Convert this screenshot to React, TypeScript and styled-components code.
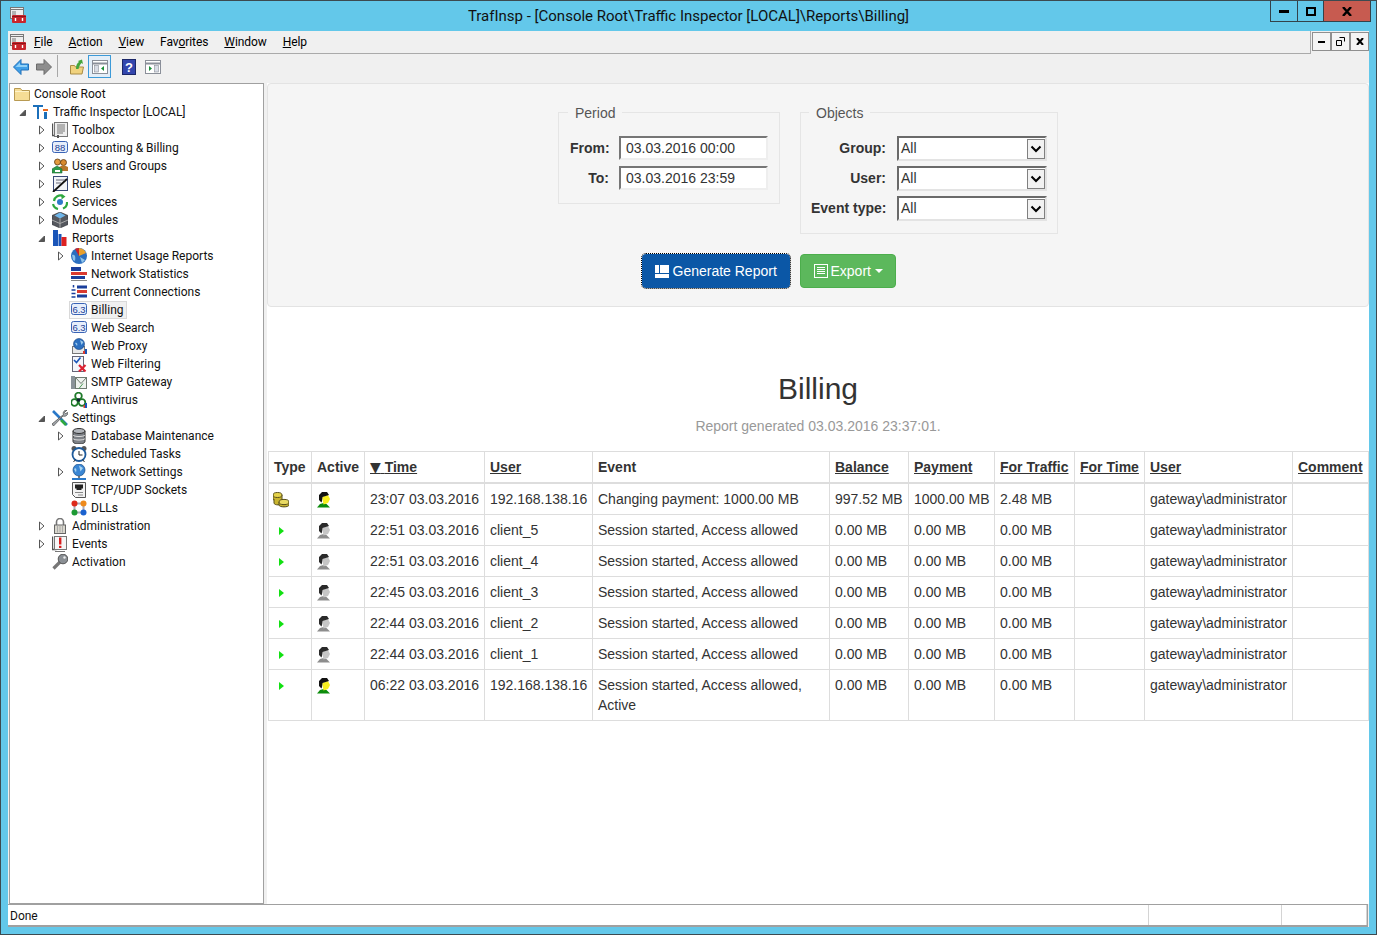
import {FC, ReactNode} from "react";
import styled, {createGlobalStyle} from "styled-components";

const uiFont = `Roboto, "Noto Sans", sans-serif`;
const pageFont = `"Liberation Sans", Arial, sans-serif`;

const icons: Record<string, ReactNode> = {
  app: <>
    <rect x=".5" y=".5" width="13" height="11" fill="#eee" stroke="#777"/>
    <path d="M1 2.500h12M2 5h4M2 7h4" stroke="#777"/>
    <rect x="2" y="8" width="14" height="8" rx="1" fill="#c8252c"/>
    <path d="M2 9.500h14" stroke="#8e1419"/>
    <path d="M5.500 11v3M12.500 11v3" stroke="#fff" strokeWidth="1.400"/>
  </>,
  folder: <>
    <path d="M.5 2.500h6l1.500 2h7.500v10h-15z" fill="#f6dd96" stroke="#b89a52"/>
    <path d="M1 5.500h14" stroke="#fff3c9"/>
  </>,
  logo: <>
    <path d="M0 1h10v2H6v12H4V3H0z" fill="#1b6fba"/>
    <rect x="10" y="5" width="5" height="2" fill="#ec6a1e"/>
    <rect x="11" y="8" width="3" height="7" fill="#1b6fba"/>
  </>,
  toolbox: <>
    <path d="M.5 1.500v12h4" fill="none" stroke="#555" strokeWidth="1.400"/>
    <rect x="2.500" y=".5" width="13" height="14" fill="#eee" stroke="#777"/>
    <path d="M5 3h8M5 5h8M5 7h8M5 9h8M5 11h6" stroke="#777"/>
    <rect x="5" y="13" width="2" height="3" fill="#555"/>
  </>,
  digits88: <>
    <rect x=".5" y="1.500" width="15" height="11" rx="2" fill="#e6eefb" stroke="#3a63b5"/>
    <text x="8" y="10.500" fontSize="9.500" textAnchor="middle" fontFamily={pageFont} fill="#1d3f95">88</text>
  </>,
  digits63: <>
    <rect x=".5" y="1.500" width="15" height="11" rx="2" fill="#e6eefb" stroke="#3a63b5"/>
    <text x="8" y="10.500" fontSize="9.500" textAnchor="middle" fontFamily={pageFont} fill="#1d3f95">6.3</text>
  </>,
  users: <>
    <circle cx="5.500" cy="4" r="3" fill="#e59b3d" stroke="#5b3a12" strokeWidth=".8"/>
    <circle cx="11.500" cy="4.500" r="3" fill="#d98a2e" stroke="#5b3a12" strokeWidth=".8"/>
    <path d="M7 13V9l4.500-2 4.500 2v4z" fill="#b8772b"/>
    <path d="M0 15v-4l5-3 5 3v4z" fill="#2f9a4b" stroke="#1f6a32" strokeWidth=".6"/>
    <rect x="3" y="12" width="5" height="2" fill="#fff"/>
  </>,
  rules: <>
    <rect x="1.500" y=".5" width="14" height="14" fill="#f2f4f8" stroke="#3a4a78"/>
    <path d="M1 16L15 3" stroke="#111" strokeWidth="1.800"/>
    <path d="M4 4h9M4 7h5" stroke="#667"/>
  </>,
  services: <>
    <path d="M2 7a6.500 6.500 0 0 1 9-5" fill="none" stroke="#2ea83f" strokeWidth="2.200"/>
    <path d="M9.500 0l4 2.500-4 3z" fill="#2ea83f"/>
    <path d="M15 8a6.500 6.500 0 0 1-4 6.500" fill="none" stroke="#2ea83f" strokeWidth="2.200"/>
    <path d="M6 15a6.500 6.500 0 0 1-5-5" fill="none" stroke="#2ea83f" strokeWidth="2.200"/>
    <circle cx="8" cy="8" r="3" fill="#2e79c9"/>
  </>,
  modules: <>
    <path d="M8 0l8 3.500v9L8 16l-8-3.500v-9z" fill="#55585e" stroke="#2c2e33" strokeWidth=".6"/>
    <path d="M8 .5l5.500 3L8 6.500l-5.500-3z" fill="#6fb6ea"/>
    <path d="M0 8l8 3.500L16 8M8 6.500V16" fill="none" stroke="#aaa"/>
  </>,
  reports: <>
    <rect x="1" y="0" width="5" height="16" fill="#1a55b8"/>
    <rect x="6.500" y="4" width="3" height="12" fill="#1a55b8"/>
    <rect x="9.500" y="7" width="5" height="9" fill="#dd2222"/>
  </>,
  internet: <>
    <circle cx="8" cy="8" r="8" fill="#2b6fc0"/>
    <path d="M1 7c3-1 4 2 3 6l-2-1zM9 9l5 3-3 3z" fill="#8fc3ea"/>
    <path d="M8 8V0a8 8 0 0 1 7 5z" fill="#e8a02e"/>
    <path d="M8 8L4 1a8 8 0 0 1 4-1z" fill="#c9252b"/>
  </>,
  netstat: <>
    <rect x="0" y="1" width="10" height="4" fill="#1a3f9c"/>
    <rect x="0" y="6" width="16" height="3" fill="#d93a30"/>
    <rect x="0" y="10" width="14" height="3" fill="#1a3f9c"/>
    <path d="M0 14.500h16" stroke="#888"/>
  </>,
  current: <>
    <path d="M2.500 1v2.500M.5 6h4M.5 9.500h4M.5 13h4" stroke="#1a3f9c" strokeWidth="1.500"/>
    <rect x="6" y="1.500" width="10" height="3" fill="#1a3f9c"/>
    <rect x="6" y="6" width="10" height="3" fill="#d93a30"/>
    <rect x="6" y="10.500" width="10" height="3" fill="#1a3f9c"/>
  </>,
  proxy: <>
    <rect x="1.500" y="8.500" width="12" height="7" fill="#e8e8e8" stroke="#777"/>
    <circle cx="8" cy="6" r="5.500" fill="#2b6fc0" stroke="#16407c" strokeWidth=".6"/>
    <path d="M4 5c2-1 3 1 2 3zM9 2l3.500 2-2 3z" fill="#9cc9ea"/>
    <rect x="14" y="11" width="2" height="5" fill="#1a55b8"/>
    <rect x="12" y="13" width="2" height="3" fill="#d93a30"/>
  </>,
  filter: <>
    <rect x="1.500" y=".5" width="11" height="15" fill="#f4f6fb" stroke="#667"/>
    <path d="M3 4l2.500 2.500 4-5" fill="none" stroke="#1a55b8" strokeWidth="1.600"/>
    <path d="M8 9l6.500 6.500M14.500 9L8 15.500" stroke="#dd2233" strokeWidth="2.200"/>
  </>,
  smtp: <>
    <rect x="0" y="2" width="4" height="13" fill="#8a9298"/>
    <rect x="4.500" y="3.500" width="11" height="11" fill="#eef2ee" stroke="#6e7a70"/>
    <path d="M4.500 3.500l5.500 6 5.500-6" fill="none" stroke="#6e7a70"/>
    <path d="M8 14.500l4-5" stroke="#4b9a55"/>
  </>,
  antivirus: <>
    <circle cx="7.500" cy="4" r="3.300" fill="none" stroke="#1f7a2a" strokeWidth="1.800"/>
    <circle cx="3.500" cy="10.500" r="3.300" fill="none" stroke="#1f7a2a" strokeWidth="1.800"/>
    <circle cx="11" cy="10.500" r="3.300" fill="none" stroke="#1f7a2a" strokeWidth="1.800"/>
    <circle cx="7.500" cy="8" r="1.800" fill="#123"/>
    <rect x="14" y="11" width="2" height="5" fill="#1a55b8"/>
    <rect x="12.500" y="13" width="1.500" height="3" fill="#d93a30"/>
  </>,
  settings: <>
    <path d="M1 1l14 14" stroke="#2a78c8" strokeWidth="2.600"/>
    <path d="M15 0c-2.500 0-4.500 2-3.500 4.500L0 14l1.500 2L11 6c2.500 1 5-1 5-3.500l-2.500 1-1-1z" fill="#a4a9ae" stroke="#444" strokeWidth=".7"/>
    <path d="M9 10l5 5" stroke="#2ea83f" strokeWidth="2.600"/>
  </>,
  db: <>
    <path d="M2 3v10.500c0 1.500 2.500 2.500 6 2.500s6-1 6-2.500V3" fill="#7d8187" stroke="#333"/>
    <ellipse cx="8" cy="3" rx="6" ry="2.500" fill="#b0b4ba" stroke="#333"/>
    <path d="M2 7c1 2 11 2 12 0M2 10.500c1 2 11 2 12 0" fill="none" stroke="#ddd"/>
  </>,
  tasks: <>
    <circle cx="3" cy="2.500" r="2.500" fill="#555"/>
    <circle cx="13" cy="2.500" r="2.500" fill="#555"/>
    <circle cx="8" cy="8.500" r="6.500" fill="#fff" stroke="#1d5a9c" strokeWidth="1.800"/>
    <path d="M8 5v4h3.500" fill="none" stroke="#222"/>
    <path d="M2.500 16l2-2.500M13.500 16l-2-2.500" stroke="#333"/>
  </>,
  netset: <>
    <circle cx="8" cy="6" r="6" fill="#3a86d4" stroke="#17497f" strokeWidth=".7"/>
    <path d="M3 5c2-2 3 0 2 3.500zM8 1.500L12 4 9.500 7.500z" fill="#a9d4f0"/>
    <path d="M8 12v2" stroke="#555" strokeWidth="1.500"/>
    <path d="M1 15h14" stroke="#2a78c8" strokeWidth="2"/>
  </>,
  tcp: <>
    <path d="M1.500.5h13v15h-10l-3-3z" fill="#f2f2f2" stroke="#555"/>
    <path d="M4 2.500h8v4h-1.500V8h-5V6.500H4z" fill="#222"/>
    <path d="M4 10.500h8M7 13h5" stroke="#888"/>
  </>,
  dlls: <>
    <path d="M3.500 3.500h9v9h-9z" fill="none" stroke="#aab" strokeWidth="2"/>
    <circle cx="3.500" cy="3.500" r="3" fill="#dd2a1c"/>
    <circle cx="12.500" cy="3.500" r="3" fill="#ee8a1c"/>
    <circle cx="3.500" cy="12.500" r="3" fill="#1d9a34"/>
    <circle cx="12.500" cy="12.500" r="3" fill="#1b62cf"/>
  </>,
  admin: <>
    <path d="M4.500 7V4a3.500 3.500 0 0 1 7 0v3" fill="none" stroke="#777" strokeWidth="1.600"/>
    <rect x="2.500" y="7" width="11" height="8.500" fill="#d8d6cc" stroke="#666"/>
    <path d="M5.500 7.500v7M8 7.500v7M10.500 7.500v7" stroke="#aaa"/>
  </>,
  events: <>
    <path d="M.5 .5v13h4" fill="none" stroke="#555" strokeWidth="1.400"/>
    <rect x="2.500" y=".5" width="12" height="13" fill="#f6f6f6" stroke="#777"/>
    <rect x="7" y="1.500" width="2.400" height="7" fill="#d81e1e"/>
    <rect x="7" y="9.800" width="2.400" height="2.200" fill="#d81e1e"/>
    <path d="M3 15.500h10" stroke="#777"/>
  </>,
  key: <>
    <path d="M9 7L1.500 14.500" stroke="#777" strokeWidth="3.200"/>
    <circle cx="11" cy="5" r="4.800" fill="#8a8f94" stroke="#555"/>
    <circle cx="12.500" cy="3.500" r="1.200" fill="#eee"/>
  </>,
  back: <>
    <path d="M8 .5L.5 8 8 15.500V11h7.500V5H8z" fill="#3f9fe8" stroke="#1f6fb8"/>
    <path d="M7 3.500L2.500 8H14V6H7z" fill="#8fd0f7"/>
  </>,
  forward: <>
    <path d="M8 .5L15.500 8 8 15.500V11H.5V5H8z" fill="#8d8d8d" stroke="#6b6b6b"/>
  </>,
  folderUp: <>
    <path d="M1.500 6.500h4l1 1.500h8l-1.500 7H1.500z" fill="#f0d27e" stroke="#a98c45"/>
    <path d="M7 10c0-4 1-6 3-7L9 2l4-1.500L14 5l-1.500-1C11 5.500 10 7.500 9.500 10z" fill="#43a63c"/>
  </>,
  panelLeft: <>
    <rect x=".5" y="1.500" width="15" height="13" fill="#fff" stroke="#8a8f99"/>
    <path d="M.5 4.500h15" stroke="#8a8f99" strokeWidth="2"/>
    <rect x="2.500" y="6.500" width="4" height="6.500" fill="#d9dde6" stroke="#8a8f99" strokeWidth=".6"/>
    <path d="M12 7l-3 2.500 3 2.500z" fill="#1b8f3a"/>
  </>,
  panelRight: <>
    <rect x=".5" y="1.500" width="15" height="13" fill="#fff" stroke="#8a8f99"/>
    <path d="M.5 4.500h15" stroke="#8a8f99" strokeWidth="2"/>
    <rect x="9.500" y="6.500" width="4" height="6.500" fill="#d9dde6" stroke="#8a8f99" strokeWidth=".6"/>
    <path d="M4 7l3 2.500L4 12z" fill="#1b8f3a"/>
  </>,
  help: <>
    <rect x="1.500" y=".5" width="13" height="15" fill="#3346ad" stroke="#1b2768"/>
    <text x="8" y="12.500" fontSize="13" fontWeight="700" textAnchor="middle" fontFamily={pageFont} fill="#fff">?</text>
  </>,
  coins: <>
    <path d="M0 3v4c0 2.500 9 2.500 9 0V3" fill="#c9b52f" stroke="#59501a"/>
    <ellipse cx="4.500" cy="3" rx="4.500" ry="2.500" fill="#e4d24a" stroke="#59501a"/>
    <path d="M1 7v4c0 2.500 8 2.500 8 0V7" fill="#c9b52f" stroke="#59501a"/>
    <path d="M6 10v3c0 2.500 10 2.500 10 0v-3" fill="#c9b52f" stroke="#59501a"/>
    <ellipse cx="11" cy="10" rx="5" ry="2.600" fill="#e9da63" stroke="#59501a"/>
  </>,
  personOn: <>
    <path d="M1 15.500l3-3.500 3.500-1 3 1 3.500 3.500z" fill="#0c8c0c"/>
    <path d="M6 5l6-2 2 4-2 4-4.500 1.500z" fill="#f7ef20"/>
    <path d="M3 8V3l3-3h5l2 3-6.500 2-.5 4L5.500 10.500z" fill="#111"/>
  </>,
  personOff: <>
    <path d="M1 15.500l3-3.500 3.500-1 3 1 3.500 3.500z" fill="#8d8d8d"/>
    <path d="M6 5l6-2 2 4-2 4-4.500 1.500z" fill="#c6c6c6"/>
    <path d="M3 8V3l3-3h5l2 3-6.500 2-.5 4L5.500 10.500z" fill="#2a2a2a"/>
  </>,
  start: <path d="M5 4l5 4-5 4z" fill="#12e012"/>,
};

const Icon: FC<{name: string}> = ({name}) => (
  <IconSvg viewBox="0 0 16 16">{icons[name]}</IconSvg>
);

type TreeItem = {
  label: string;
  icon: string;
  level: number;
  toggle?: "open" | "closed";
  selected?: boolean;
};

const tree: TreeItem[] = [
  {label: "Console Root", icon: "folder", level: 0},
  {label: "Traffic Inspector [LOCAL]", icon: "logo", level: 1, toggle: "open"},
  {label: "Toolbox", icon: "toolbox", level: 2, toggle: "closed"},
  {label: "Accounting & Billing", icon: "digits88", level: 2, toggle: "closed"},
  {label: "Users and Groups", icon: "users", level: 2, toggle: "closed"},
  {label: "Rules", icon: "rules", level: 2, toggle: "closed"},
  {label: "Services", icon: "services", level: 2, toggle: "closed"},
  {label: "Modules", icon: "modules", level: 2, toggle: "closed"},
  {label: "Reports", icon: "reports", level: 2, toggle: "open"},
  {label: "Internet Usage Reports", icon: "internet", level: 3, toggle: "closed"},
  {label: "Network Statistics", icon: "netstat", level: 3},
  {label: "Current Connections", icon: "current", level: 3},
  {label: "Billing", icon: "digits63", level: 3, selected: true},
  {label: "Web Search", icon: "digits63", level: 3},
  {label: "Web Proxy", icon: "proxy", level: 3},
  {label: "Web Filtering", icon: "filter", level: 3},
  {label: "SMTP Gateway", icon: "smtp", level: 3},
  {label: "Antivirus", icon: "antivirus", level: 3},
  {label: "Settings", icon: "settings", level: 2, toggle: "open"},
  {label: "Database Maintenance", icon: "db", level: 3, toggle: "closed"},
  {label: "Scheduled Tasks", icon: "tasks", level: 3},
  {label: "Network Settings", icon: "netset", level: 3, toggle: "closed"},
  {label: "TCP/UDP Sockets", icon: "tcp", level: 3},
  {label: "DLLs", icon: "dlls", level: 3},
  {label: "Administration", icon: "admin", level: 2, toggle: "closed"},
  {label: "Events", icon: "events", level: 2, toggle: "closed"},
  {label: "Activation", icon: "key", level: 2},
];

const columns = [
  {title: "Type", width: 43},
  {title: "Active", width: 53},
  {title: "Time", width: 120, link: true, sorted: true},
  {title: "User", width: 108, link: true},
  {title: "Event", width: 237},
  {title: "Balance", width: 79, link: true},
  {title: "Payment", width: 86, link: true},
  {title: "For Traffic", width: 80, link: true},
  {title: "For Time", width: 70, link: true},
  {title: "User", width: 148, link: true},
  {title: "Comment", width: 76, link: true},
];

const started = "Session started, Access allowed";
const rows = [
  {type: "coins", active: "personOn", time: "23:07 03.03.2016", user: "192.168.138.16", event: "Changing payment: 1000.00 MB", balance: "997.52 MB", payment: "1000.00 MB", traffic: "2.48 MB"},
  {type: "start", active: "personOff", time: "22:51 03.03.2016", user: "client_5", event: started, balance: "0.00 MB", payment: "0.00 MB", traffic: "0.00 MB"},
  {type: "start", active: "personOff", time: "22:51 03.03.2016", user: "client_4", event: started, balance: "0.00 MB", payment: "0.00 MB", traffic: "0.00 MB"},
  {type: "start", active: "personOff", time: "22:45 03.03.2016", user: "client_3", event: started, balance: "0.00 MB", payment: "0.00 MB", traffic: "0.00 MB"},
  {type: "start", active: "personOff", time: "22:44 03.03.2016", user: "client_2", event: started, balance: "0.00 MB", payment: "0.00 MB", traffic: "0.00 MB"},
  {type: "start", active: "personOff", time: "22:44 03.03.2016", user: "client_1", event: started, balance: "0.00 MB", payment: "0.00 MB", traffic: "0.00 MB"},
  {type: "start", active: "personOn", time: "06:22 03.03.2016", user: "192.168.138.16", event: "Session started, Access allowed, Active", balance: "0.00 MB", payment: "0.00 MB", traffic: "0.00 MB"},
];

const Select: FC = () => (
  <SelectBox>
    All
    <SelectArrow>
      <svg width="12" height="8" viewBox="0 0 12 8"><path d="M1.500 1.500L6 6l4.500-4.500" fill="none" stroke="#000" strokeWidth="2"/></svg>
    </SelectArrow>
  </SelectBox>
);

const App: FC = () => {
  return (
    <Frame>
      <GlobalStyle/>
      <TitleBar>
        <TitleIcon><Icon name="app"/></TitleIcon>
        <TitleText>TrafInsp - [Console Root\Traffic Inspector [LOCAL]\Reports\Billing]</TitleText>
        <WindowButtons>
          <WindowButton $width={27}><svg width="10" height="3"><rect width="10" height="3" fill="#000"/></svg></WindowButton>
          <WindowButton $width={26}><svg width="10" height="9"><rect x="1" y="1" width="8" height="7" fill="none" stroke="#000" strokeWidth="2"/></svg></WindowButton>
          <WindowButton $width={46} $close><svg width="10" height="9"><path d="M1 0l8 9M9 0L1 9" stroke="#000" strokeWidth="2.400"/></svg></WindowButton>
        </WindowButtons>
      </TitleBar>

      <Client>
        <MenuRow>
          <MenuBar>
            <MenuIcon><Icon name="app"/></MenuIcon>
            <MenuItem><u>F</u>ile</MenuItem>
            <MenuItem><u>A</u>ction</MenuItem>
            <MenuItem><u>V</u>iew</MenuItem>
            <MenuItem>Fav<u>o</u>rites</MenuItem>
            <MenuItem><u>W</u>indow</MenuItem>
            <MenuItem><u>H</u>elp</MenuItem>
          </MenuBar>
          <ChildButtons>
            <ChildButton><svg width="7" height="2"><rect width="7" height="2" fill="#000"/></svg></ChildButton>
            <ChildButton><svg width="9" height="9"><path d="M3.500.5h5v4M.5 3.500h5v5h-5z" fill="none" stroke="#000"/></svg></ChildButton>
            <ChildButton><svg width="8" height="7"><path d="M1 0l6 7M7 0L1 7" stroke="#000" strokeWidth="2"/></svg></ChildButton>
          </ChildButtons>
        </MenuRow>

        <Toolbar>
          <ToolButton><Icon name="back"/></ToolButton>
          <ToolButton><Icon name="forward"/></ToolButton>
          <ToolSeparator/>
          <ToolButton $space={7}><Icon name="folderUp"/></ToolButton>
          <ToolButton $pressed><Icon name="panelLeft"/></ToolButton>
          <ToolButton $space={6}><Icon name="help"/></ToolButton>
          <ToolButton $space={1}><Icon name="panelRight"/></ToolButton>
        </Toolbar>

        <Main>
          <TreePane>
            {tree.map(item => (
              <TreeRow key={item.label} $level={item.level}>
                {item.level > 0 && (
                  <Toggle>
                    {item.toggle === "closed" && (
                      <svg width="7" height="10" viewBox="0 0 7 10"><path d="M1.500 1v8L6 5z" fill="#fff" stroke="#555"/></svg>
                    )}
                    {item.toggle === "open" && (
                      <svg width="7" height="7" viewBox="0 0 7 7"><path d="M6.500 1v5.500H1z" fill="#555" stroke="#555"/></svg>
                    )}
                  </Toggle>
                )}
                <TreeNode $selected={item.selected}>
                  <Icon name={item.icon}/>
                  <TreeLabel $selected={item.selected}>{item.label}</TreeLabel>
                </TreeNode>
              </TreeRow>
            ))}
          </TreePane>

          <ReportPane>
            <FilterPanel>
              <FilterGroups>
                <Group $side={11}>
                  <Legend>Period</Legend>
                  <Fields $label={39}>
                    <FieldLabel>From:</FieldLabel>
                    <DateInput readOnly value="03.03.2016 00:00"/>
                    <FieldLabel>To:</FieldLabel>
                    <DateInput readOnly value="03.03.2016 23:59"/>
                  </Fields>
                </Group>
                <Group $side={10}>
                  <Legend>Objects</Legend>
                  <Fields $label={75}>
                    <FieldLabel>Group:</FieldLabel>
                    <Select/>
                    <FieldLabel>User:</FieldLabel>
                    <Select/>
                    <FieldLabel>Event type:</FieldLabel>
                    <Select/>
                  </Fields>
                </Group>
              </FilterGroups>
              <Actions>
                <GenerateButton>
                  <svg width="14" height="13" viewBox="0 0 14 13"><path d="M0 0h4v8H0zM5 0h9v8H5zM0 9h14v4H0z" fill="#fff"/></svg>
                  Generate Report
                </GenerateButton>
                <ExportButton>
                  <svg width="14" height="14" viewBox="0 0 14 14"><rect x=".5" y=".5" width="13" height="13" fill="none" stroke="#fff"/><path d="M3 3.500h8M3 5.500h8M3 7.500h8M3 9.500h8" stroke="#fff"/></svg>
                  Export
                  <Caret/>
                </ExportButton>
              </Actions>
            </FilterPanel>

            <ReportTitle>Billing</ReportTitle>
            <ReportDate>Report generated 03.03.2016 23:37:01.</ReportDate>

            <Table>
              <colgroup>
                {columns.map((c, i) => <col key={i} width={c.width}/>)}
              </colgroup>
              <thead>
                <tr>
                  {columns.map((c, i) => (
                    <Th key={i} $link={c.link}>
                      {c.sorted && <><SortMark>▼</SortMark> </>}
                      {c.title}
                    </Th>
                  ))}
                </tr>
              </thead>
              <tbody>
                {rows.map((r, i) => (
                  <tr key={i}>
                    <Td><CellIcon $shift={r.type === "coins" ? -1 : 0}><Icon name={r.type}/></CellIcon></Td>
                    <Td><CellIcon $shift={-1}><Icon name={r.active}/></CellIcon></Td>
                    <Td>{r.time}</Td>
                    <Td>{r.user}</Td>
                    <Td $wrap>{r.event}</Td>
                    <Td>{r.balance}</Td>
                    <Td>{r.payment}</Td>
                    <Td>{r.traffic}</Td>
                    <Td/>
                    <Td>gateway\administrator</Td>
                    <Td/>
                  </tr>
                ))}
              </tbody>
            </Table>
          </ReportPane>
        </Main>

        <StatusBar>
          <StatusCell $grow>Done</StatusCell>
          <StatusCell $width={133}/>
          <StatusCell $width={85}/>
        </StatusBar>
      </Client>
    </Frame>
  )
}

const GlobalStyle = createGlobalStyle`
  html, body {
    margin: 0;
    padding: 0;
    background: #63c8ea;
  }
  * {
    box-sizing: border-box;
  }
`
const Frame = styled.div`
  width: 1377px;
  height: 935px;
  display: flex;
  flex-direction: column;
  padding: 0 7px 7px;
  background: #63c8ea;
  border: 1px solid #3c4a50;
  overflow: hidden;
`
const IconSvg = styled.svg`
  display: block;
  width: 16px;
  height: 16px;
  flex: none;
`
const TitleBar = styled.div`
  height: 30px;
  flex: none;
  display: grid;
  grid-template-columns: 1fr auto 1fr;
  align-items: start;
  margin: 0 -7px;
`
const TitleIcon = styled.div`
  padding: 6px 0 0 9px;
`
const TitleText = styled.div`
  padding-top: 5px;
  font-family: ${uiFont};
  font-size: 15px;
  line-height: 20px;
  color: #111;
  white-space: nowrap;
`
const WindowButtons = styled.div`
  justify-self: end;
  display: flex;
  height: 21px;
  margin-right: 5px;
  border: 1px solid #33424a;
  border-top: 0;
`
const WindowButton = styled.div<{$width: number; $close?: boolean}>`
  width: ${props => props.$width}px;
  display: flex;
  align-items: center;
  justify-content: center;
  background: ${props => props.$close ? "#c75b50" : "transparent"};
  border-right: ${props => props.$close ? "0" : "1px solid #33424a"};
`
const Client = styled.div`
  flex: 1;
  min-height: 0;
  display: flex;
  flex-direction: column;
  background: #f0f0f0;
`
const MenuRow = styled.div`
  height: 23px;
  flex: none;
  display: flex;
`
const MenuBar = styled.div`
  flex: 1;
  display: flex;
  align-items: center;
  padding-left: 2px;
  background: #f0f0f0;
  border-right: 1px solid #aaaaaa;
  border-bottom: 1px solid #aaaaaa;
`
const MenuIcon = styled.div`
  width: 16px;
`
const MenuItem = styled.div`
  padding: 0 8px;
  font-family: ${uiFont};
  font-size: 12px;
  line-height: 20px;
  letter-spacing: -0.08px;
  color: #000;
`
const ChildButtons = styled.div`
  display: flex;
  align-items: flex-start;
  padding: 1px 0 0 1px;
`
const ChildButton = styled.div`
  width: 19px;
  height: 19px;
  display: flex;
  align-items: center;
  justify-content: center;
  background: #f4f4f4;
  border: 1px solid #8f8f8f;
`
const Toolbar = styled.div`
  height: 29px;
  flex: none;
  display: flex;
  align-items: flex-start;
  padding: 1px 0 0 1px;
`
const ToolButton = styled.div<{$space?: number; $pressed?: boolean}>`
  width: 23px;
  height: 23px;
  margin-left: ${props => props.$space || 0}px;
  display: flex;
  align-items: center;
  justify-content: center;
  background: ${props => props.$pressed ? "#e3eef8" : "transparent"};
  border: 1px solid ${props => props.$pressed ? "#3c9ad8" : "transparent"};
`
const ToolSeparator = styled.div`
  width: 1px;
  height: 22px;
  margin: 0 0 0 2px;
  background: #a8a8a8;
`
const Main = styled.div`
  flex: 1;
  min-height: 0;
  display: flex;
  gap: 3px;
  padding-left: 1px;
`
const TreePane = styled.div`
  width: 255px;
  flex: none;
  padding-top: 1px;
  background: #fff;
  border: 1px solid #a0a0a0;
`
const TreeRow = styled.div<{$level: number}>`
  height: 18px;
  display: flex;
  align-items: center;
  padding-left: ${props => props.$level === 0 ? 4 : 4 + 19 * (props.$level - 1)}px;
`
const Toggle = styled.div`
  width: 19px;
  flex: none;
  display: flex;
  padding-left: 5px;
`
const TreeNode = styled.div<{$selected?: boolean}>`
  display: flex;
  align-items: center;
  height: 18px;
  margin-left: ${props => props.$selected ? -2 : 0}px;
  padding-left: ${props => props.$selected ? 1 : 0}px;
  border: 1px solid ${props => props.$selected ? "#d9d9d9" : "transparent"};
  border-left-width: ${props => props.$selected ? 1 : 0}px;
  background: ${props => props.$selected ? "#fafafa" : "transparent"};
`
const TreeLabel = styled.span<{$selected?: boolean}>`
  height: 16px;
  margin-left: 4px;
  padding-right: 2px;
  font-family: ${uiFont};
  font-size: 12px;
  line-height: 16px;
  color: #111;
  white-space: nowrap;
  background: ${props => props.$selected ? "#f0f0f0" : "transparent"};
`
const ReportPane = styled.div`
  flex: 1;
  min-width: 0;
  background: #fff;
  font-family: ${pageFont};
  font-size: 14px;
  line-height: 20px;
  color: #333;
`
const FilterPanel = styled.div`
  height: 224px;
  padding-top: 18px;
  background: #f5f5f5;
  border: 1px solid #e3e3e3;
  border-radius: 4px;
`
const FilterGroups = styled.div`
  display: flex;
  justify-content: center;
  align-items: flex-start;
  gap: 20px;
  padding-right: 20px;
`
const Group = styled.fieldset<{$side: number}>`
  margin: 0;
  padding: 14px ${props => props.$side}px 7px;
  border: 1px solid #e5e5e5;
  min-width: 0;
`
const Legend = styled.legend`
  margin-left: -2px;
  padding: 0 7px;
  height: 20px;
  color: #555;
  line-height: 22px;
`
const Fields = styled.div<{$label: number}>`
  display: grid;
  grid-template-columns: ${props => props.$label}px auto;
  grid-auto-rows: 30px;
  column-gap: 10px;
`
const FieldLabel = styled.label`
  height: 24px;
  line-height: 24px;
  text-align: right;
  font-weight: 700;
  white-space: nowrap;
`
const DateInput = styled.input`
  width: 149px;
  height: 24px;
  padding: 0 5px;
  background: #fff;
  border: 2px solid;
  border-color: #767676 #eeeeee #eeeeee #767676;
  font-family: ${pageFont};
  font-size: 14px;
  color: #333;
  outline: none;
`
const SelectBox = styled.div`
  position: relative;
  width: 150px;
  height: 25px;
  margin-left: 1px;
  padding-left: 2px;
  background: #fff;
  border: 2px solid;
  border-color: #6a6a6a #e3e3e3 #e3e3e3 #6a6a6a;
  line-height: 21px;
  color: #333;
`
const SelectArrow = styled.div`
  position: absolute;
  top: 1px;
  right: 0;
  width: 18px;
  height: 20px;
  display: flex;
  align-items: center;
  justify-content: center;
  background: #f2f2f2;
  border: 1px solid #808080;
`
const Actions = styled.div`
  display: flex;
  justify-content: center;
  gap: 10px;
  margin-top: 20px;
  padding-right: 99px;
`
const ActionButton = styled.div`
  height: 34px;
  flex: none;
  display: flex;
  align-items: center;
  gap: 4px;
  padding: 0 8px 0 13px;
  border-radius: 4px;
  color: #fff;
  white-space: nowrap;

  svg {
    flex: none;
  }
`
const GenerateButton = styled(ActionButton)`
  width: 148px;
  background: #0b57a6;
  outline: 1px dotted #000;
`
const ExportButton = styled(ActionButton)`
  width: 96px;
  gap: 3px;
  background: #5cb85c;
  border: 1px solid #4cae4c;
`
const Caret = styled.span`
  width: 0;
  height: 0;
  margin-left: 1px;
  border-top: 4px solid #fff;
  border-left: 4px solid transparent;
  border-right: 4px solid transparent;
`
const ReportTitle = styled.h2`
  margin: 65px 0 0;
  text-align: center;
  font-size: 30px;
  font-weight: 400;
  line-height: 33px;
  color: #333;
`
const ReportDate = styled.div`
  margin-top: 11px;
  text-align: center;
  color: #999;
`
const Table = styled.table`
  width: 1100px;
  margin: 15px 0 0 1px;
  table-layout: fixed;
  border-collapse: collapse;
`
const Th = styled.th<{$link?: boolean}>`
  padding: 5px;
  border: 1px solid #ddd;
  border-bottom-width: 2px;
  text-align: left;
  font-weight: 700;
  white-space: nowrap;
  text-decoration: ${props => props.$link ? "underline" : "none"};
`
const SortMark = styled.span`
  font-family: "DejaVu Sans", sans-serif;
  font-weight: 400;
  line-height: 1;
`
const Td = styled.td<{$wrap?: boolean}>`
  padding: 5px;
  border: 1px solid #ddd;
  vertical-align: top;
  white-space: ${props => props.$wrap ? "normal" : "nowrap"};
`
const CellIcon = styled.div<{$shift: number}>`
  margin-left: ${props => props.$shift}px;
  padding-top: 3px;
`
const StatusBar = styled.div`
  height: 23px;
  flex: none;
  display: flex;
  margin-right: 1px;
  background: #fff;
  border-style: solid;
  border-color: #a0a0a0;
  border-width: 1px 1px 2px 0;
`
const StatusCell = styled.div<{$grow?: boolean; $width?: number}>`
  flex: ${props => props.$grow ? 1 : "none"};
  width: ${props => props.$width ? `${props.$width}px` : "auto"};
  padding-left: 2px;
  font-family: ${uiFont};
  font-size: 12px;
  line-height: 23px;
  color: #111;
  border-right: 1px solid #d4d4d4;
`

export default App
